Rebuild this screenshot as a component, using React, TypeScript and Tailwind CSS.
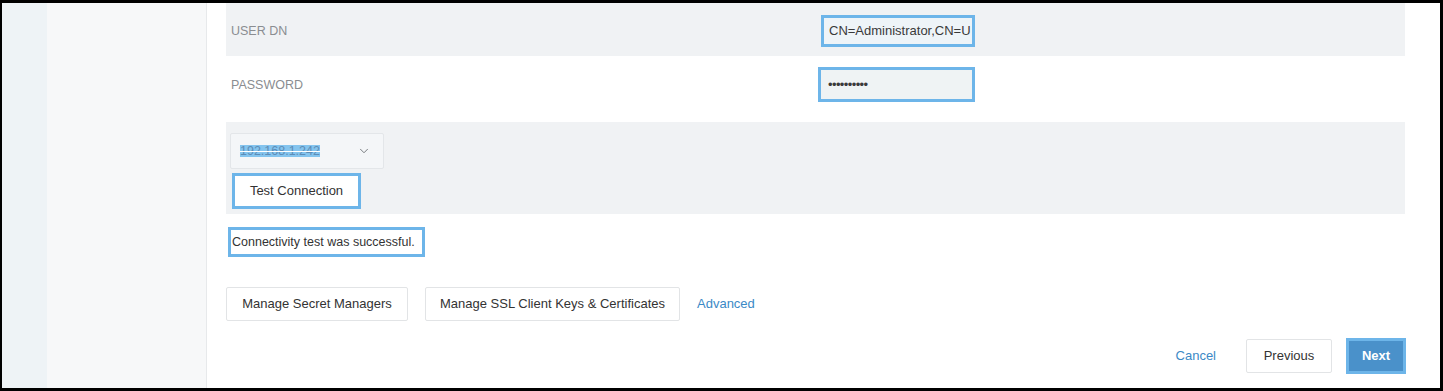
import React from "react";
import { ChevronDown } from "lucide-react";

const font = { fontFamily: '"Liberation Sans", Arial, Helvetica, sans-serif' };

export default function App() {
  return (
    <div
      className="w-[1443px] h-[391px] bg-black pt-[3px] pl-[2px] pr-[3px] pb-[3px] overflow-hidden"
      style={font}
    >
      <div className="flex h-full w-full">
        <div className="w-[45px] h-full bg-[#eef3f6]" />
        <div className="w-[160px] h-full bg-[#f7f8f9] border-r border-[#e7e9eb]" />
        <div className="flex-1 h-full bg-white pl-[19px] pr-[35px] flex flex-col text-[12.5px]">
          {/* USER DN row */}
          <div className="h-[53px] bg-[#f0f2f4] flex items-center shrink-0">
            <div className="w-[595px] pl-[5px] text-[#8a8d91] pt-[3px]">USER DN</div>
            <div className="w-[154px] h-[32px] border-[3px] border-[#6db5e9] bg-[#eef4f8] flex items-center pl-[5px] overflow-hidden whitespace-nowrap text-[#3a3a3a] text-[13px] mt-[2px]">
              CN=Administrator,CN=U
            </div>
          </div>
          {/* PASSWORD row */}
          <div className="h-[66px] bg-white flex items-start shrink-0">
            <div className="w-[592px] pl-[5px] text-[#8a8d91] pt-[20px]">PASSWORD</div>
            <div className="w-[157px] h-[35px] border-[3px] border-[#6db5e9] bg-[#eff3f4] flex items-center pl-[7px] text-[#3a3a3a] text-[13px] tracking-[-0.6px] mt-[11px]">
              ••••••••••
            </div>
          </div>
          {/* Gray section */}
          <div className="h-[92px] bg-[#f0f2f4] shrink-0 pt-[11px] pl-[4px] flex flex-col">
            <div className="w-[154px] h-[36px] bg-[#f4f6f8] border border-[#e3e6e9] rounded-[2px] flex items-center justify-between pl-[9px] pr-[12px]">
              <span className="bg-[#84c4ee] text-[#5d8db7] leading-[12px] line-through decoration-[#ffffff]">
                192.168.1.242
              </span>
              <ChevronDown size={14} strokeWidth={1.5} className="text-[#666a6e]" />
            </div>
            <div className="mt-[4px] ml-[2px] w-[129px] h-[36px] bg-white border-[3px] border-[#6db5e9] flex items-center justify-center text-[#333] text-[13px]">
              Test Connection
            </div>
          </div>
          {/* Success message */}
          <div className="mt-[13px] ml-[2px] w-[197px] h-[30px] border-[3px] border-[#6db5e9] flex items-center pl-[1px] text-[#333] text-[12.5px] whitespace-nowrap shrink-0">
            Connectivity test was successful.
          </div>
          {/* Manage buttons */}
          <div className="mt-[30px] flex items-center h-[34px] shrink-0">
            <div className="w-[182px] h-[34px] bg-white border border-[#e2e4e6] rounded-[2px] flex items-center justify-center text-[#333] text-[13px]">
              Manage Secret Managers
            </div>
            <div className="ml-[17px] w-[255px] h-[34px] bg-white border border-[#e2e4e6] rounded-[2px] flex items-center justify-center text-[#333] text-[13px]">
              Manage SSL Client Keys &amp; Certificates
            </div>
            <div className="ml-[17px] text-[#3b89c6] text-[13px]">Advanced</div>
          </div>
          {/* Footer */}
          <div className="mt-[17px] flex items-center justify-end h-[36px] shrink-0 -mr-[1px]">
            <div className="text-[#3b89c6] mr-[30px] text-[13px]">Cancel</div>
            <div className="w-[86px] h-[34px] bg-white border border-[#e2e4e6] rounded-[2px] flex items-center justify-center text-[#333] text-[13px]">
              Previous
            </div>
            <div className="ml-[14px] w-[60px] h-[36px] bg-[#4a91ca] border-[3px] border-[#6db5e9] flex items-center justify-center text-white text-[13px] font-semibold">
              Next
            </div>
          </div>
        </div>
      </div>
    </div>
  );
}
